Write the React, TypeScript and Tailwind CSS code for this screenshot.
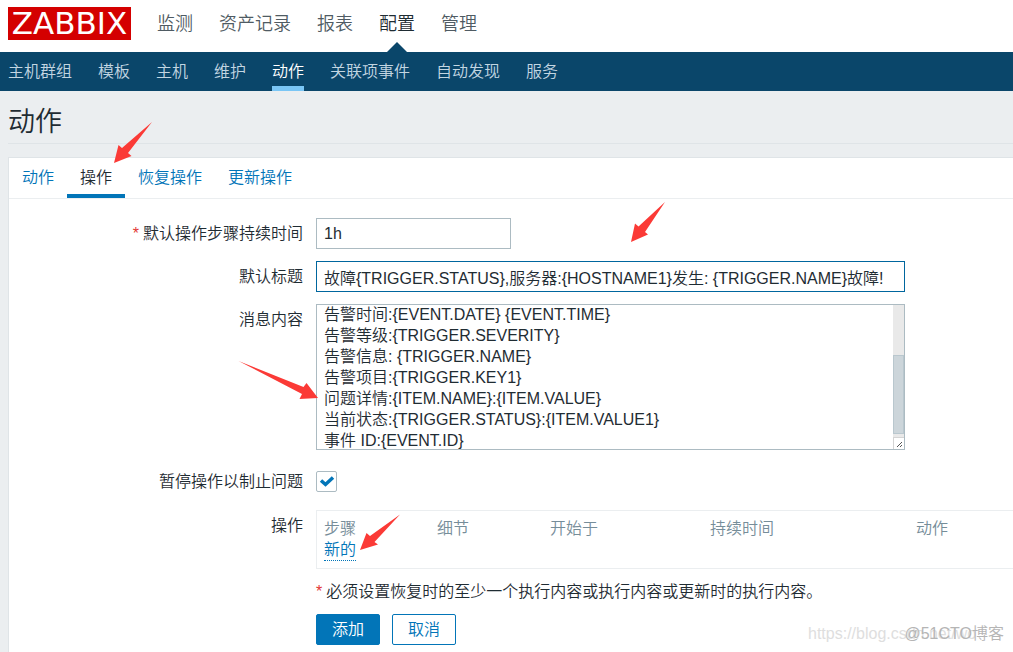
import { useEffect, useRef } from "react";

const mainMenu = ["监测", "资产记录", "报表", "配置", "管理"];
const subMenu = ["主机群组", "模板", "主机", "维护", "动作", "关联项事件", "自动发现", "服务"];
const tabs = ["动作", "操作", "恢复操作", "更新操作"];

const message = `



告警时间:{EVENT.DATE} {EVENT.TIME}
告警等级:{TRIGGER.SEVERITY}
告警信息: {TRIGGER.NAME}
告警项目:{TRIGGER.KEY1}
问题详情:{ITEM.NAME}:{ITEM.VALUE}
当前状态:{TRIGGER.STATUS}:{ITEM.VALUE1}
事件 ID:{EVENT.ID}`;

const columns = [
  { label: "步骤", width: "w-[120px]" },
  { label: "细节", width: "w-[113px]" },
  { label: "开始于", width: "w-[160px]" },
  { label: "持续时间", width: "w-[206px]" },
  { label: "动作", width: "" },
];

function Header() {
  return (
    <header className="bg-white">
      <div className="flex h-[52px] items-start pt-[7px] pl-2">
        <a
          href="#"
          className="flex h-[33px] w-[123px] items-center justify-center bg-[#d40000] font-['DejaVu_Sans',sans-serif] text-[31px] leading-[33px] font-normal text-white"
        >
          ZABBIX
        </a>
        <nav className="ml-[26px] flex gap-[26px] text-lg leading-[35px]">
          {mainMenu.map((item) => (
            <a
              key={item}
              href="#"
              className={`relative h-[45px] ${item === "配置" ? "text-[#1f2c33]" : "text-[#4f5b63]"}`}
            >
              {item}
              {item === "配置" && (
                <span className="absolute bottom-0 left-1/2 -ml-[10px] border-x-10 border-b-10 border-x-transparent border-b-[#0a466a]" />
              )}
            </a>
          ))}
        </nav>
      </div>
      <nav className="flex h-[39px] gap-[26px] bg-[#0a466a] pl-2 leading-10">
        {subMenu.map((item) => (
          <a
            key={item}
            href="#"
            className={item === "动作" ? "border-b-5 border-[#7ac6f5] text-white" : "text-[#c3d6e2]"}
          >
            {item}
          </a>
        ))}
      </nav>
    </header>
  );
}

function Tabs() {
  return (
    <div className="flex h-[41px] border-b border-[#ebeef0]">
      {tabs.map((tab) => (
        <a
          key={tab}
          href="#"
          className={`px-[13px] leading-10 ${
            tab === "操作" ? "border-b-4 border-[#0275b8] text-[#1f2c33]" : "text-[#0275b8]"
          }`}
        >
          {tab}
        </a>
      ))}
    </div>
  );
}

function MessageBox() {
  const ref = useRef<HTMLTextAreaElement>(null);

  // Open on the last lines of the message
  useEffect(() => {
    if (ref.current) ref.current.scrollTop = 89;
  }, []);

  return (
    <div className="flex h-[146px] w-[589px] border border-[#acbbc2]">
      <textarea
        id="message"
        ref={ref}
        defaultValue={message}
        className="min-w-0 grow resize-none overflow-y-auto px-[7px] pt-1 pb-[5px] leading-[21px] outline-none [scrollbar-width:none]"
      />
      <div className="flex w-[11px] flex-col bg-[#e9e9e9] pt-[50px]">
        <div className="h-[79px] border border-[#b9c7ce] bg-[#ccd5da]" />
        <svg viewBox="0 0 11 12" className="mt-auto h-3 w-[11px] bg-white">
          <path d="M0 .5H11M.5 0V12" stroke="#d4d4d4" />
          <path
            d="M4 9h1v1h-1zM5 8h1v1h-1zM6 7h1v1h-1zM7 6h1v1h-1zM8 5h1v1h-1zM7 9h1v1h-1zM8 8h1v1h-1z"
            fill="#555"
          />
        </svg>
      </div>
    </div>
  );
}

function OperationsTable() {
  return (
    <div className="h-[59px] border border-r-0 border-[#ebeef0] pt-[7px]">
      <table className="w-full table-fixed text-left leading-[22px]">
        <thead>
          <tr>
            {columns.map((col) => (
              <th key={col.label} className={`${col.width} p-0 font-[350] text-[#768d99] first:pl-[7px]`}>
                {col.label}
              </th>
            ))}
          </tr>
        </thead>
        <tbody>
          <tr>
            <td colSpan={5} className="p-0 pl-[7px]">
              <button type="button" className="block h-[21px] border-b border-dotted border-[#0275b8] leading-5 text-[#0275b8]">
                新的
              </button>
            </td>
          </tr>
        </tbody>
      </table>
    </div>
  );
}

function ActionForm() {
  const label = "text-right leading-[31px]";
  const field = "h-[31px] border px-[7px] outline-none";

  return (
    <form className="grid grid-cols-[294px_1fr] gap-x-[13px] gap-y-3 pt-[19px]" onSubmit={(e) => e.preventDefault()}>
      <label htmlFor="duration" className={label}>
        <span className="mr-1 text-[#e33734]">*</span>默认操作步骤持续时间
      </label>
      <div className="flex">
        <input id="duration" defaultValue="1h" className={`${field} w-[195px] border-[#acbbc2]`} />
      </div>

      <label htmlFor="subject" className={label}>默认标题</label>
      <div className="flex">
        <input
          id="subject"
          defaultValue="故障{TRIGGER.STATUS},服务器:{HOSTNAME1}发生: {TRIGGER.NAME}故障!"
          className={`${field} w-[589px] border-[#00669e]`}
        />
      </div>

      <label htmlFor="message" className={label}>消息内容</label>
      <MessageBox />

      <label htmlFor="pause" className="pt-1 text-right leading-[31px]">暂停操作以制止问题</label>
      <div className="relative flex h-9 items-center pt-[3px]">
        <input
          id="pause"
          type="checkbox"
          defaultChecked
          className="peer size-[21px] appearance-none rounded-xs border border-[#acbbc2]"
        />
        <svg
          viewBox="0 0 21 21"
          className="pointer-events-none invisible absolute left-0 size-[21px] peer-checked:visible"
        >
          <path d="M5 9.500L9.500 13.500L17 6.500" fill="none" stroke="#0275b8" strokeWidth="3.500" />
        </svg>
      </div>

      <span className={label}>操作</span>
      <OperationsTable />

      <div className="col-start-2 leading-[21px]">
        <span className="mr-1 text-[#e33734]">*</span>
        必须设置恢复时的至少一个执行内容或执行内容或更新时的执行内容。
      </div>

      <div className="col-start-2 flex gap-3">
        <button type="submit" className="h-[31px] rounded-xs border border-[#0275b8] bg-[#0275b8] px-[15px] text-white">
          添加
        </button>
        <button type="button" className="h-[31px] rounded-xs border border-[#0275b8] px-[15px] text-[#0275b8]">
          取消
        </button>
      </div>
    </form>
  );
}

// Hand-drawn pointers laid over the page
function Arrows() {
  return (
    <svg width="700" height="570" className="pointer-events-none absolute top-0 left-0" fill="#fb3a36">
      <path d="M152 122L128 153L131.500 156L114 163L118.500 145L122 148Z" />
      <path d="M665 202L645 232L648 234.500L631 242L635 223.500L638.500 226.500Z" />
      <path d="M238.500 361L303.500 387L306.500 383L318 398L299.500 399L302 394Z" />
      <path d="M400 514.500L374.500 542L378 544.500L360 550L366.500 533L370 536Z" />
    </svg>
  );
}

function Watermark() {
  return (
    <div className="pointer-events-none absolute right-[9px] bottom-2 text-base leading-5">
      <span className="absolute top-0 right-0 w-[196px] text-[#dedede]">https://blog.csdn.net/wo</span>
      <span className="relative text-[#b5b5b5]">@51CTO博客</span>
    </div>
  );
}

export default function App() {
  return (
    <div className="relative min-h-screen overflow-hidden bg-[#ebeef0] font-['Liberation_Sans','Noto_Sans_CJK_SC',sans-serif] text-base font-[350] text-[#1f2c33]">
      <Header />
      <main className="pl-2">
        <h1 className="h-[53px] border-b border-[#dfe4e7] pt-[11px] text-[27px] leading-10">动作</h1>
        <section className="mt-[13px] border-t border-l border-[#dfe4e7] bg-white pb-[7px]">
          <Tabs />
          <ActionForm />
        </section>
      </main>
      <Arrows />
      <Watermark />
    </div>
  );
}
